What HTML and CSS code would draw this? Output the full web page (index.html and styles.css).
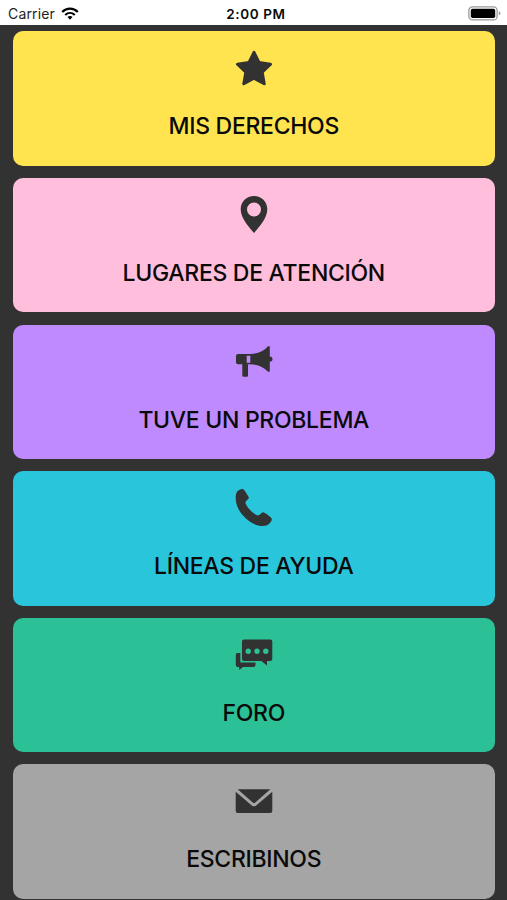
FILE: index.html
```html
<!DOCTYPE html>
<html lang="es">
<head>
  <meta charset="UTF-8" />
  <meta name="viewport" content="width=device-width, initial-scale=1.0"/>
  <title>Menú</title>
  <link rel="stylesheet" href="styles.css">
</head>
<body>
  <header class="status-bar">
    <div class="carrier">
      <span>Carrier</span>
      <svg class="wifi" viewBox="0 0 18 13" fill="none" stroke="#000" stroke-width="2.2">
        <path d="M1.2 5C5.6 .6 12.400 .6 16.800 5"/>
        <path d="M4.200 8C7 5.300 11 5.300 13.800 8"/>
        <path d="M6.500 10L9 12.700L11.500 10C10.200 8.700 7.800 8.700 6.500 10z" fill="#000" stroke="none"/>
      </svg>
    </div>
    <div class="time">2:00 PM</div>
    <div class="battery-wrap">
      <svg class="battery" viewBox="0 0 33 15">
        <rect x=".9" y=".9" width="28.200" height="13" rx="3.500" fill="#fff" stroke="#999" stroke-width="1.300"/>
        <rect x="2.800" y="2.800" width="24.400" height="9.200" rx="1.800"/>
        <path d="M30.800 5.300C33 6 33 8.800 30.800 9.500z" fill="#999"/>
      </svg>
    </div>
  </header>

  <main class="menu">
    <a class="card yellow">
      <svg class="icon" viewBox="0 -1 60 60">
        <path d="M30 12.300L35 22.500L46.500 24.200L38.200 32.200L40.200 43.800L30 38.300L19.800 43.800L21.800 32.200L13.500 24.200L25 22.500z" stroke-width="3" stroke-linejoin="round"/>
      </svg>
      <span>MIS DERECHOS</span>
    </a>
    <a class="card pink">
      <svg class="icon" viewBox="0 0 60 60">
        <path fill-rule="evenodd" stroke="none" d="M30 10C22.500 10 16.700 15.800 16.700 23.200C16.700 32.200 24.500 40.500 30 47C35.500 40.500 43.300 32.200 43.300 23.200C43.300 15.800 37.500 10 30 10zM30 16.500A7 7 0 1 1 30 30.500A7 7 0 1 1 30 16.500z"/>
      </svg>
      <span>LUGARES DE ATENCIÓN</span>
    </a>
    <a class="card purple">
      <svg class="icon" viewBox="0 0 60 60">
        <path stroke="none" d="M14 21H22.700V31.300H24V42.700Q24 43.700 23 43.700H19.500Q18.300 43.700 18.300 42.500V31.300H14Q12 31.300 12 29.300V23Q12 21 14 21z"/>
        <path stroke="none" d="M26.300 21C34 20.800 39.500 18 43.800 13.400Q45.800 12.300 45.800 14.500V23.400A2.700 2.700 0 0 1 45.800 28.800V37.500Q45.800 39.700 43.800 38.600C39.500 34.200 34 31.500 26.300 31.300z"/>
        <path stroke="none" d="M22 21H27V22.700H22zM22 29.700H27V31.300H22z"/>
      </svg>
      <span>TUVE UN PROBLEMA</span>
    </a>
    <a class="card cyan">
      <svg class="icon" viewBox="0 0 60 60">
        <path stroke="none" d="M13.200 12.500C15.100 10.500 17.400 9.500 19 10.100C20.400 11 23.600 16 24.800 18.500C25.300 20 22.400 21.500 21.500 23C20.500 25.700 29 35.200 33.700 36.600C35.600 36.700 37.500 33.300 39 33.300C40.700 33.500 46.500 37.700 47.700 39.500C48.500 41.800 44.500 46.300 41 46.800C33.500 47.800 25.600 43.700 19.300 36.800C13.500 30.500 11.200 23.500 11.800 16.500Q12 14 13.200 12.500z"/>
      </svg>
      <span>LÍNEAS DE AYUDA</span>
    </a>
    <a class="card green">
      <svg class="icon" viewBox="0 -0.6 60 60">
        <path fill-rule="evenodd" stroke="none" d="M20 13H46.300Q48.300 13 48.300 15V32.300Q48.300 34.300 46.300 34.300H43V39L37.300 34.300H20Q18 34.300 18 32.300V15Q18 13 20 13zM24.200 22A2.700 2.700 0 1 0 24.200 27.400A2.700 2.700 0 1 0 24.200 22zM33 22A2.700 2.700 0 1 0 33 27.400A2.700 2.700 0 1 0 33 22zM41.800 22A2.700 2.700 0 1 0 41.800 27.400A2.700 2.700 0 1 0 41.800 22z"/>
        <path stroke="none" d="M13.500 26.300H16.300V35.800H31.500V38.500Q31.500 40.500 29.500 40.500H19L15.200 43.500V40.500H13.800Q11.800 40.500 11.800 38.500V28Q11.800 26.300 13.500 26.300z"/>
      </svg>
      <span>FORO</span>
    </a>
    <a class="card gray">
      <svg class="icon" viewBox="0 -1 60 60">
        <path stroke="none" d="M13.700 16.300H46.300L31 29.800Q30 30.700 29 29.800z"/>
        <path stroke="none" d="M11.700 18.700L27.800 32.500Q30 34.200 32.200 32.500L48.300 18.700V38Q48.300 40 46.300 40H13.700Q11.700 40 11.700 38z"/>
      </svg>
      <span>ESCRIBINOS</span>
    </a>
  </main>
</body>
</html>
```
FILE: styles.css
```css
* {
  box-sizing: border-box;
}

body {
  margin: 0;
  height: 900px;
  overflow: hidden;
  background: #323232;
  color: #0a0a0a;
  font-family: Inter, "Liberation Sans", sans-serif;
}

/* Status bar */
.status-bar {
  display: grid;
  grid-template-columns: 1fr auto 1fr;
  align-items: center;
  height: 25.4px;
  padding: 2px 6px 0 8px;
  background: #fff;
  font-size: 14px;
}

.carrier {
  display: flex;
  align-items: center;
  gap: 6px;
  color: #222;
  letter-spacing: 0.15px;
}

.wifi {
  width: 18px;
  height: 13px;
}

.time {
  margin-left: 3px;
  font-size: 13.5px;
  font-weight: 600;
  letter-spacing: 0.6px;
}

.battery-wrap {
  display: flex;
  justify-content: flex-end;
}

.battery {
  width: 33px;
  height: 15px;
}

/* Menu cards */
.menu {
  display: flex;
  flex-direction: column;
  gap: 12.1px;
  padding: 6px 12.500px 0 13px;
}

.card {
  display: flex;
  flex-direction: column;
  align-items: center;
  flex: none;
  height: 134.5px;
  padding-top: 8px;
  border-radius: 10px;
  font-size: 23px;
  font-weight: 550;
  letter-spacing: -0.3px;
  line-height: 30px;
}

.card span {
  margin-top: 12px;
}

.icon {
  width: 60px;
  height: 60px;
  fill: #323232;
  stroke: #323232;
}

.yellow { background: #ffe450; }
.pink { background: #ffbfdc; }
.purple { background: #c08aff; }
.cyan { background: #29c5db; }
.green { background: #2bc096; }
.gray { background: #a5a5a5; }
```
